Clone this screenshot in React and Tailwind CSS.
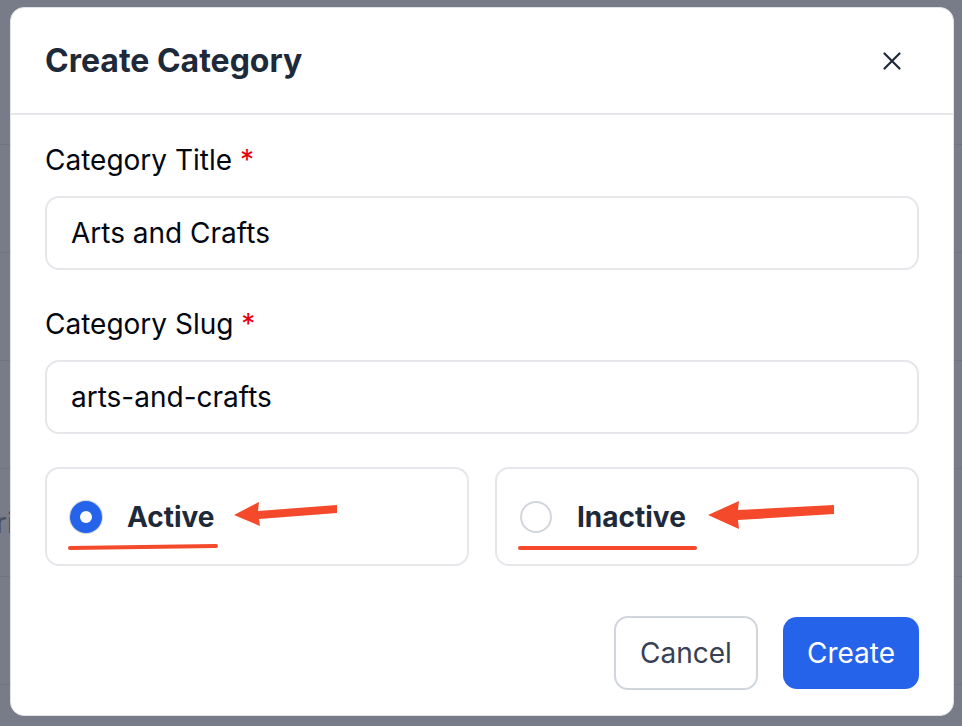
import React, { useState } from "react";

const ROWS = [0, 1, 2, 3, 4, 5, 6];

const Arrow = ({ points }) => (
  <svg className="absolute left-0 top-0 pointer-events-none" width="420" height="99" viewBox="0 0 420 99">
    <polygon points={points} fill="#f4492a" />
  </svg>
);

const Underline = ({ x1, y1, x2, y2 }) => (
  <svg className="absolute left-0 top-0 pointer-events-none" width="420" height="99" viewBox="0 0 420 99">
    <line x1={x1} y1={y1} x2={x2} y2={y2} stroke="#f4492a" strokeWidth="4" strokeLinecap="round" />
  </svg>
);

const StatusCard = ({ label, checked, onSelect, underline, arrow }) => (
  <button
    type="button"
    onClick={onSelect}
    className="relative flex items-center h-[99px] pl-[23px] rounded-[14px] border-2 border-gray-200 bg-white text-left"
  >
    {checked ? (
      <span className="flex items-center justify-center w-8 h-8 rounded-full bg-[#2563eb] ring-1 ring-gray-300">
        <span className="w-3 h-3 rounded-full bg-white" />
      </span>
    ) : (
      <span className="w-8 h-8 rounded-full border-2 border-gray-300 bg-white" />
    )}
    <span className="ml-[25px] text-[28px] leading-[34px] font-bold text-gray-800">{label}</span>
    <Underline {...underline} />
    <Arrow points={arrow} />
  </button>
);

export default function App() {
  const [title, setTitle] = useState("Arts and Crafts");
  const [slug, setSlug] = useState("arts-and-crafts");
  const [status, setStatus] = useState("active");

  return (
    <div className="relative w-[962px] h-[726px] overflow-hidden bg-[#787c88] font-['Inter',sans-serif]">
      {/* page behind the overlay */}
      <div className="pt-[37px]">
        {ROWS.map((r) => (
          <div key={r} className="h-[108px] border-b border-[#6f737e] flex items-center">
            {r === 4 && <span className="ml-[-4px] text-[28px] text-[#4b4f5a]">ri</span>}
          </div>
        ))}
      </div>

      {/* modal */}
      <div className="absolute top-[7px] left-[10px] w-[944px] h-[709px] rounded-[14px] bg-white border border-[#e2e3e8] flex flex-col">
        <div className="h-[107px] shrink-0 border-b-2 border-gray-200 flex items-center justify-between pl-[34px] pr-[52px]">
          <h2 className="text-[32px] font-bold text-gray-800">Create Category</h2>
          <button type="button" className="text-gray-800">
            <svg width="18" height="18" viewBox="0 0 18 18" fill="none" stroke="currentColor" strokeWidth="2.2" strokeLinecap="round">
              <path d="M1.5 1.5l15 15M16.5 1.5l-15 15" />
            </svg>
          </button>
        </div>

        <div className="px-[34px] pt-[29px]">
          <label className="block text-[28px] leading-[32px] text-gray-950">
            Category Title <span className="text-red-600">*</span>
          </label>
          <input
            value={title}
            onChange={(e) => setTitle(e.target.value)}
            className="mt-[20px] w-full h-[74px] px-[24px] rounded-[14px] border-2 border-gray-200 text-[28px] text-gray-950 outline-none"
          />

          <label className="block mt-[38px] text-[28px] leading-[32px] text-gray-950">
            Category Slug <span className="text-red-600">*</span>
          </label>
          <input
            value={slug}
            onChange={(e) => setSlug(e.target.value)}
            className="mt-[20px] w-full h-[74px] px-[24px] rounded-[14px] border-2 border-gray-200 text-[28px] text-gray-950 outline-none"
          />

          <div className="mt-[33px] grid grid-cols-2 gap-[26px]">
            <StatusCard
              label="Active"
              checked={status === "active"}
              onSelect={() => setStatus("active")}
              underline={{ x1: 23, y1: 79, x2: 169, y2: 77 }}
              arrow="187,46 212,33 211,42 290,36 290,44 212,50 213,57"
            />
            <StatusCard
              label="Inactive"
              checked={status === "inactive"}
              onSelect={() => setStatus("inactive")}
              underline={{ x1: 23, y1: 79, x2: 198, y2: 79 }}
              arrow="211,46 242,32 241,41 337,36 337,45 241,51 242,60"
            />
          </div>

          <div className="mt-[50px] flex justify-end items-center gap-[25px]">
            <button type="button" className="w-[144px] h-[74px] rounded-[14px] border-2 border-gray-300 text-[28px] text-gray-700">
              Cancel
            </button>
            <button type="button" className="w-[136px] h-[72px] rounded-[14px] bg-[#2563eb] text-[28px] text-white">
              Create
            </button>
          </div>
        </div>
      </div>
    </div>
  );
}
